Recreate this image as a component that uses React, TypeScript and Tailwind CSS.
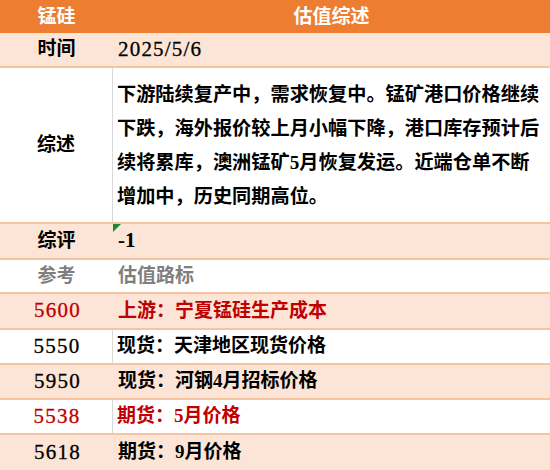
const rows = [
    { label: "5600", value: "上游：宁夏锰硅生产成本", bg: "bg-[#FCE4D6]", color: "text-[#C00000]", h: "h-[36px]", line: false },
    { label: "5550", value: "现货：天津地区现货价格", bg: "bg-white", color: "text-black", h: "h-[35px]", line: true },
    { label: "5950", value: "现货：河钢4月招标价格", bg: "bg-[#FCE4D6]", color: "text-black", h: "h-[35px]", line: false },
    { label: "5538", value: "期货：5月价格", bg: "bg-white", color: "text-[#C00000]", h: "h-[35px]", line: true },
    { label: "5618", value: "期货：9月价格", bg: "bg-[#FCE4D6]", color: "text-black", h: "h-[35px]", line: false },
];

const summary = [
    "下游陆续复产中，需求恢复中。锰矿港口价格继续",
    "下跌，海外报价较上月小幅下降，港口库存预计后",
    "续将累库，澳洲锰矿5月恢复发运。近端仓单不断",
    "增加中，历史同期高位。",
];

const font = "font-['Liberation_Serif','Noto_Sans_CJK_SC',serif]";

export default function App() {
    return (
        <div className={`w-[550px] h-[470px] bg-white overflow-hidden ${font}`}>
            {/* header */}
            <div className="flex h-[33px] bg-[#ED7D31] text-white font-bold text-[19px] leading-none">
                <div className="w-[113px] flex items-center justify-center">锰硅</div>
                <div className="flex-1 flex items-center justify-center">估值综述</div>
            </div>

            <div className="flex h-[35px] bg-[#FCE4D6] border-b-2 border-[#F7C4A2]">
                <div className="w-[113px] flex items-center justify-center font-bold text-[19px]">时间</div>
                <div className="flex-1 flex items-center pl-[5px] text-[21px] tracking-[1.2px] [-webkit-text-stroke:0.3px_black]">2025/5/6</div>
            </div>

            <div className="flex h-[156px] bg-white border-b-2 border-[#F7C4A2]">
                <div className="w-[113px] flex items-center justify-center font-bold text-[19px] border-r border-[#D9D9D9]">综述</div>
                <div className="flex-1 flex flex-col justify-center pt-[2px] pl-[4px] font-bold text-[19.2px] leading-[34px] text-black">
                    {summary.map((line) => (
                        <div key={line} className="whitespace-nowrap">{line}</div>
                    ))}
                </div>
            </div>

            <div className="flex h-[36px] bg-[#FCE4D6] border-b-2 border-[#F7C4A2]">
                <div className="w-[113px] flex items-center justify-center font-bold text-[19px]">综评</div>
                <div className="relative flex-1 flex items-center pl-[5px] font-bold text-[21px]">
                    <svg className="absolute left-0 top-0" width="8" height="8" viewBox="0 0 8 8">
                        <path d="M0 0H8L0 8Z" fill="#1C8C2E" />
                    </svg>
                    -1
                </div>
            </div>

            <div className="flex h-[34px] bg-white border-b-2 border-[#F7C4A2] text-[#7F7F7F] font-bold text-[19px]">
                <div className="w-[113px] flex items-center justify-center">参考</div>
                <div className="flex-1 flex items-center pl-[5px]">估值路标</div>
            </div>

            {rows.map((r, i) => (
                <div
                    key={r.label}
                    className={`flex ${r.h} ${r.bg} ${r.color} ${i < rows.length - 1 ? "border-b-2 border-[#F7C4A2]" : ""}`}
                >
                    <div className={`w-[113px] flex items-center justify-center pl-[2px] text-[21px] tracking-[1.2px] [-webkit-text-stroke:0.3px_currentColor] ${r.line ? "border-r border-[#D9D9D9]" : ""}`}>
                        {r.label}
                    </div>
                    <div className={`flex-1 flex items-center font-bold text-[19px] ${r.line ? "pl-[4px]" : "pl-[5px]"}`}>
                        {r.value}
                    </div>
                </div>
            ))}
        </div>
    );
}
